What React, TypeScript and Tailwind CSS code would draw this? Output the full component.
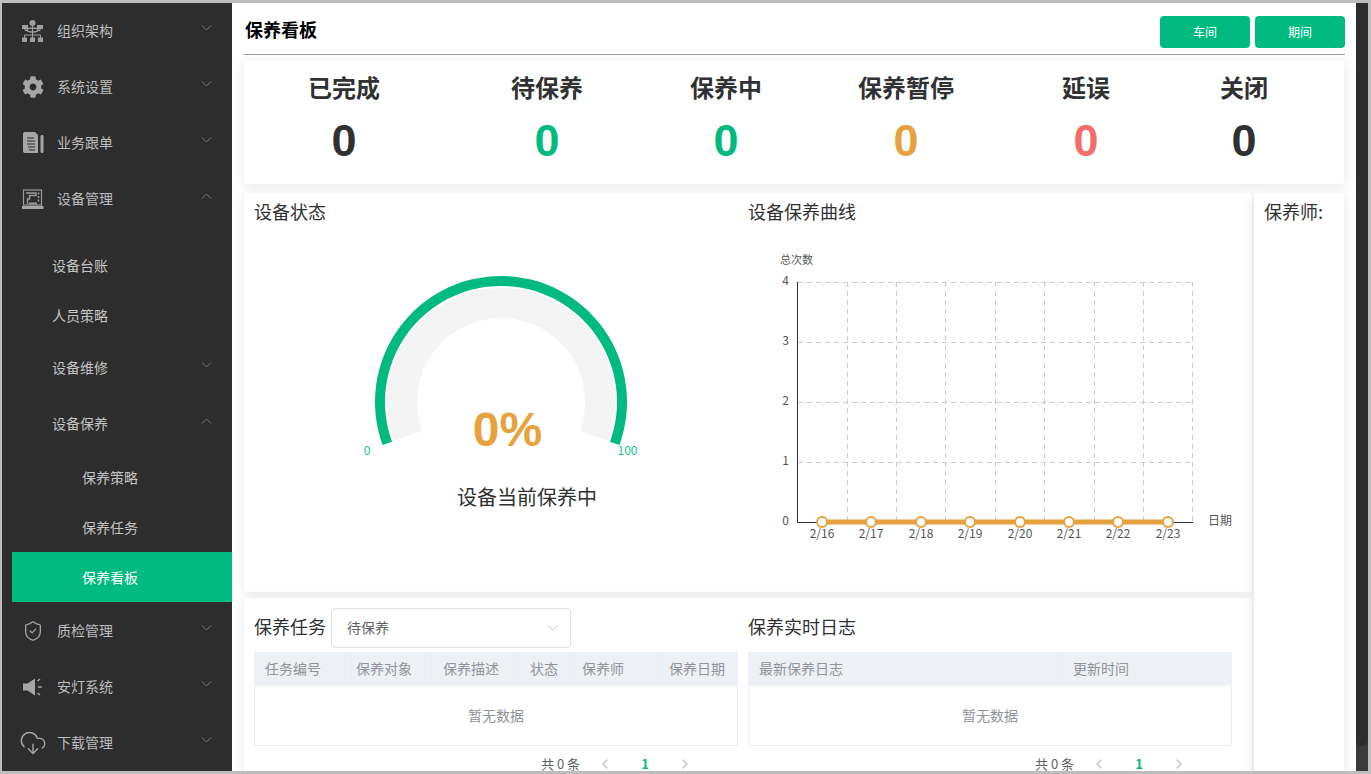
import React from "react";
import { ChevronDown, ChevronLeft, ChevronRight, CloudDownload, ShieldCheck } from "lucide-react";
import { FaCog } from "react-icons/fa";

const cjk = "font-['Noto_Sans_CJK_SC','Noto_Sans',sans-serif]";

function OrgIcon() {
  return (
    <svg width="22" height="22" viewBox="0 0 22 22" fill="#a0a0a0">
      <circle cx="10.5" cy="3" r="3" />
      <rect x="0" y="5" width="6" height="4" />
      <rect x="15" y="5" width="6" height="4" />
      <ellipse cx="10.5" cy="10" rx="5.5" ry="2" fill="none" stroke="#a0a0a0" strokeWidth="1.4" />
      <path d="M10.5 5v10M2.5 15h16M2.5 15v3M10.5 15v3M18.5 15v3M3 9v1.5h3M18 9v1.5h-3" stroke="#a0a0a0" strokeWidth="1" fill="none" />
      <rect x="0" y="17.5" width="5" height="4.5" />
      <rect x="8" y="17.5" width="5" height="4.5" />
      <rect x="16" y="17.5" width="5" height="4.5" />
    </svg>
  );
}

function DocIcon() {
  return (
    <svg width="22" height="22" viewBox="0 0 22 22">
      <path d="M1 2 Q1 0 3 0 H13 L16 3 V21 H3 Q1 21 1 19 Z" fill="#a6a6a6" />
      <path d="M5 6h7M5 9h8M5 12h8M6 15h7M7 18h6" stroke="#2d2d2d" strokeWidth="1.2" />
      <rect x="18.5" y="3" width="3" height="18" rx="1.2" fill="#a6a6a6" />
    </svg>
  );
}

function MachineIcon() {
  return (
    <svg width="22" height="22" viewBox="0 0 22 22" fill="none" stroke="#9a9a9a">
      <rect x="1.5" y="2" width="18" height="15" strokeWidth="1.2" />
      <path d="M4 5h10v2.5H7.5V11H5.5v5" strokeWidth="1.4" />
      <path d="M16.5 4.5v2M16.5 8v2M16.5 11.5v2" strokeWidth="1.6" />
      <path d="M7 15.5h8" strokeWidth="2" />
      <rect x="0" y="18" width="21.5" height="3" fill="#a6a6a6" stroke="none" />
    </svg>
  );
}

function SpeakerIcon() {
  return (
    <svg width="22" height="22" viewBox="0 0 22 22" fill="#a6a6a6">
      <path d="M1 7.5h4.5L13 2.5v17l-7.5-5H1z" />
      <path d="M15.5 5l2.5-2M16 11h4M15.5 17l2.5 2" stroke="#a6a6a6" strokeWidth="1.6" fill="none" />
    </svg>
  );
}

function Caret({ up }: { up?: boolean }) {
  return (
    <svg width="11" height="6" viewBox="0 0 11 6" fill="none" stroke="#7d7d7d" strokeWidth="1" className="mb-[6px]">
      <path d={up ? "M1 5.5 5.5 1 10 5.5" : "M1 .5 5.5 5 10 .5"} />
    </svg>
  );
}

const topBefore = [
  { label: "组织架构", icon: <OrgIcon /> },
  { label: "系统设置", icon: <FaCog size={22} color="#a6a6a6" /> },
  { label: "业务跟单", icon: <DocIcon /> },
];

const topAfter = [
  { label: "质检管理", icon: <ShieldCheck size={22} color="#a6a6a6" strokeWidth={1.4} /> },
  { label: "安灯系统", icon: <SpeakerIcon /> },
  { label: "下载管理", icon: <CloudDownload size={28} color="#a6a6a6" strokeWidth={1.2} className="shrink-0" /> },
];

function TopItem({ label, icon, up }: { label: string; icon: React.ReactNode; up?: boolean }) {
  return (
    <div className="flex h-14 items-center pl-5 pr-5 text-sm text-[#bdbdbd]">
      <span className="flex w-[22px] items-center justify-center">{icon}</span>
      <span className="ml-[13px] pb-[2px]">{label}</span>
      <span className="ml-auto flex">
        <Caret up={up} />
      </span>
    </div>
  );
}

function Sidebar() {
  return (
    <aside className="w-[230px] shrink-0 overflow-hidden bg-[#2d2d2d]">
      {topBefore.map((m) => (
        <TopItem key={m.label} {...m} />
      ))}
      <TopItem label="设备管理" icon={<MachineIcon />} up />
      <div className="ml-[10px] pt-[13px] text-sm text-[#c4c4c4]">
        <div className="flex h-[50px] items-center pl-10">设备台账</div>
        <div className="flex h-[50px] items-center pl-10">人员策略</div>
        <div className="flex h-14 items-center justify-between pl-10 pr-5">
          <span className="pb-[2px]">设备维修</span> <Caret />
        </div>
        <div className="flex h-14 items-center justify-between pl-10 pr-5">
          <span className="pb-[2px]">设备保养</span> <Caret up />
        </div>
        <div className="flex h-[50px] items-center pl-[70px]">保养策略</div>
        <div className="flex h-[50px] items-center pl-[70px]">保养任务</div>
        <div className="flex h-[50px] items-center bg-[#00ba7f] pl-[70px] text-white">保养看板</div>
      </div>
      <div className="mt-px">
        {topAfter.map((m) => (
          <TopItem key={m.label} {...m} />
        ))}
      </div>
    </aside>
  );
}

const stats = [
  { label: "已完成", color: "text-[#303133]" },
  { label: "待保养", color: "text-[#00ba7f]" },
  { label: "保养中", color: "text-[#00ba7f]" },
  { label: "保养暂停", color: "text-[#e6a23c]" },
  { label: "延误", color: "text-[#f56c6c]" },
  { label: "关闭", color: "text-[#303133]" },
];

function Gauge() {
  const cx = 501;
  const cy = 402;
  const pt = (r: number, deg: number) => {
    const a = (deg * Math.PI) / 180;
    return `${cx + r * Math.cos(a)} ${cy - r * Math.sin(a)}`;
  };
  const band = (r1: number, r2: number) =>
    `M${pt(r1, 200)} A${r1} ${r1} 0 1 1 ${pt(r1, -20)} L${pt(r2, -20)} A${r2} ${r2} 0 1 0 ${pt(r2, 200)} Z`;
  return (
    <svg width="484" height="340" viewBox="254 224 484 340" className="mt-px block">
      <path d={band(114, 84)} fill="#f4f4f4" />
      <path d={band(126, 116)} fill="#00ba7f" />
      <text x="367" y="455" fontSize="12" fill="#19c38a" textAnchor="middle">0</text>
      <text x="627.5" y="455" fontSize="12" fill="#19c38a" textAnchor="middle">100</text>
      <text x="507.5" y="446" fontSize="48" fontWeight="700" fill="#e6a23c" textAnchor="middle" fontFamily="Liberation Sans">0%</text>
      <text x="527" y="505" fontSize="20" fill="#303133" textAnchor="middle">设备当前保养中</text>
    </svg>
  );
}

const gridX = [847, 896, 945, 995, 1044, 1094, 1143, 1192];
const dots = [
  { x: 822, d: "2/16" },
  { x: 871, d: "2/17" },
  { x: 921, d: "2/18" },
  { x: 970, d: "2/19" },
  { x: 1020, d: "2/20" },
  { x: 1069, d: "2/21" },
  { x: 1118, d: "2/22" },
  { x: 1168, d: "2/23" },
];

function LineChart() {
  return (
    <svg width="484" height="340" viewBox="748 224 484 340" className="mt-px block">
      <text x="780" y="264" fontSize="11" fill="#555">总次数</text>
      {[282, 342, 402, 462].map((y) => (
        <line key={y} x1="798" x2="1193" y1={y + 0.5} y2={y + 0.5} stroke="#ccc" strokeDasharray="5 4" />
      ))}
      {gridX.map((x) => (
        <line key={x} x1={x + 0.5} x2={x + 0.5} y1="282" y2="522" stroke="#ccc" strokeDasharray="5 4" />
      ))}
      {[4, 3, 2, 1, 0].map((v, i) => (
        <text key={v} x="789" y={285 + i * 60} fontSize="12" fill="#555" textAnchor="end">{v}</text>
      ))}
      <line x1="797.5" x2="797.5" y1="282" y2="522" stroke="#333" />
      <line x1="797" x2="1193" y1="522.5" y2="522.5" stroke="#333" />
      <line x1="822" x2="1168" y1="522" y2="522" stroke="#e6a23c" strokeWidth="5" />
      {dots.map((p) => (
        <g key={p.d}>
          <circle cx={p.x} cy="522" r="5" fill="#fff" stroke="#e6a23c" strokeWidth="2" />
          <text x={p.x} y="538" fontSize="12" fill="#555" textAnchor="middle">{p.d}</text>
        </g>
      ))}
      <text x="1208" y="525" fontSize="12" fill="#555">日期</text>
    </svg>
  );
}

function DataTable({ cols }: { cols: { label: string; w: string }[] }) {
  return (
    <div className="mt-1 border border-t-0 border-[#ebeef5]">
      <div className="-mx-px flex h-[34px] bg-[#edf0f5] text-sm text-[#909399]">
        {cols.map((c) => (
          <div key={c.label} className={`${c.w} flex items-center border-r border-[#eaedf3] pb-[2px] pl-[11px] last:border-r-0`}>
            {c.label}
          </div>
        ))}
      </div>
      <div className="flex h-[59px] items-center justify-center pb-[2px] text-sm text-[#909399]">暂无数据</div>
    </div>
  );
}

function Pager() {
  return (
    <div className="mt-[11px] flex h-[13px] items-center pl-[287px] text-[13px] leading-[13px] text-[#606266]">
      <span className="w-[44px]">共 0 条</span>
      <span className="flex w-10 justify-center">
        <ChevronLeft size={16} color="#c0c4cc" strokeWidth={2} />
      </span>
      <span className="flex w-10 justify-center font-bold text-[#00ba7f]">1</span>
      <span className="flex w-10 justify-center">
        <ChevronRight size={16} color="#c0c4cc" strokeWidth={2} />
      </span>
    </div>
  );
}

const cardCls = "rounded-[4px] bg-white shadow-[0_2px_12px_0_rgba(0,0,0,0.1)]";

export default function App() {
  return (
    <div className={`${cjk} flex h-[774px] w-[1371px] overflow-hidden bg-[#bdbdbd] pb-[3px] pl-[2px] pr-[3px] pt-[3px]`}>
      <Sidebar />
      <main className="min-w-0 flex-1 overflow-hidden bg-white px-3">
        <header className="-mr-px flex h-[52px] items-start justify-between border-b border-[#999] pl-px">
          <h1 className="mt-[14px] text-lg font-bold leading-6 text-black">保养看板</h1>
          <div className="mt-[13px] flex gap-[5px]">
            <button className="h-8 w-[90px] rounded-[4px] bg-[#00ba7f] text-xs text-white">车间</button>
            <button className="h-8 w-[90px] rounded-[4px] bg-[#00ba7f] text-xs text-white">期间</button>
          </div>
        </header>

        <section className={`${cardCls} mt-[5px] grid h-[124px] grid-cols-[200px_206px_152px_208px_152px_164px] content-start pt-[9px]`}>
          {stats.map((s) => (
            <div key={s.label} className="text-center">
              <div className="text-2xl font-bold leading-9 text-[#303133]">{s.label}</div>
              <div className={`${s.color} mt-[6px] font-['Liberation_Sans',sans-serif] text-[45px] font-bold leading-[60px]`}>0</div>
            </div>
          ))}
        </section>

        <div className="mt-[9px] flex gap-[2px]">
          <div className="w-[1008px]">
            <section className={`${cardCls} grid h-[399px] grid-cols-[484px_484px] gap-x-[10px] px-[10px] pt-[6px]`}>
              <div>
                <h2 className="text-lg font-normal leading-6 text-[#303133]">设备状态</h2>
                <Gauge />
              </div>
              <div>
                <h2 className="text-lg font-normal leading-6 text-[#303133]">设备保养曲线</h2>
                <LineChart />
              </div>
            </section>
            <section className={`${cardCls} mt-[6px] grid h-[200px] grid-cols-[484px_484px] gap-x-[10px] px-[10px] pt-[10px]`}>
              <div>
                <div className="flex h-10 items-center">
                  <h2 className="pb-1 text-lg font-normal leading-6 text-[#303133]">保养任务</h2>
                  <div className="ml-[5px] flex h-10 w-[240px] items-center justify-between rounded-[4px] border border-[#dcdfe6] pb-[2px] pl-[15px] pr-[8px] text-sm text-[#606266]">
                    待保养
                    <ChevronDown size={18} color="#c0c4cc" strokeWidth={1.3} className="mt-[2px]" />
                  </div>
                </div>
                <DataTable
                  cols={[
                    { label: "任务编号", w: "w-[91px]" },
                    { label: "保养对象", w: "w-[87px]" },
                    { label: "保养描述", w: "w-[87px]" },
                    { label: "状态", w: "w-[52px]" },
                    { label: "保养师", w: "w-[87px]" },
                    { label: "保养日期", w: "w-[80px]" },
                  ]}
                />
                <Pager />
              </div>
              <div>
                <div className="flex h-10 items-center">
                  <h2 className="pb-1 text-lg font-normal leading-6 text-[#303133]">保养实时日志</h2>
                </div>
                <DataTable
                  cols={[
                    { label: "最新保养日志", w: "w-[314px]" },
                    { label: "更新时间", w: "w-[170px]" },
                  ]}
                />
                <Pager />
              </div>
            </section>
          </div>
          <section className={`${cardCls} h-[600px] w-[90px] pl-[10px] pt-[6px]`}>
            <h2 className="text-lg font-normal leading-6 text-[#303133]">保养师:</h2>
          </section>
        </div>
      </main>
      <div className="w-[12px] shrink-0 bg-[#3a3a3a]">
        <div className="h-[743px] rounded-b-md bg-[#2d2d2d]" />
      </div>
    </div>
  );
}
